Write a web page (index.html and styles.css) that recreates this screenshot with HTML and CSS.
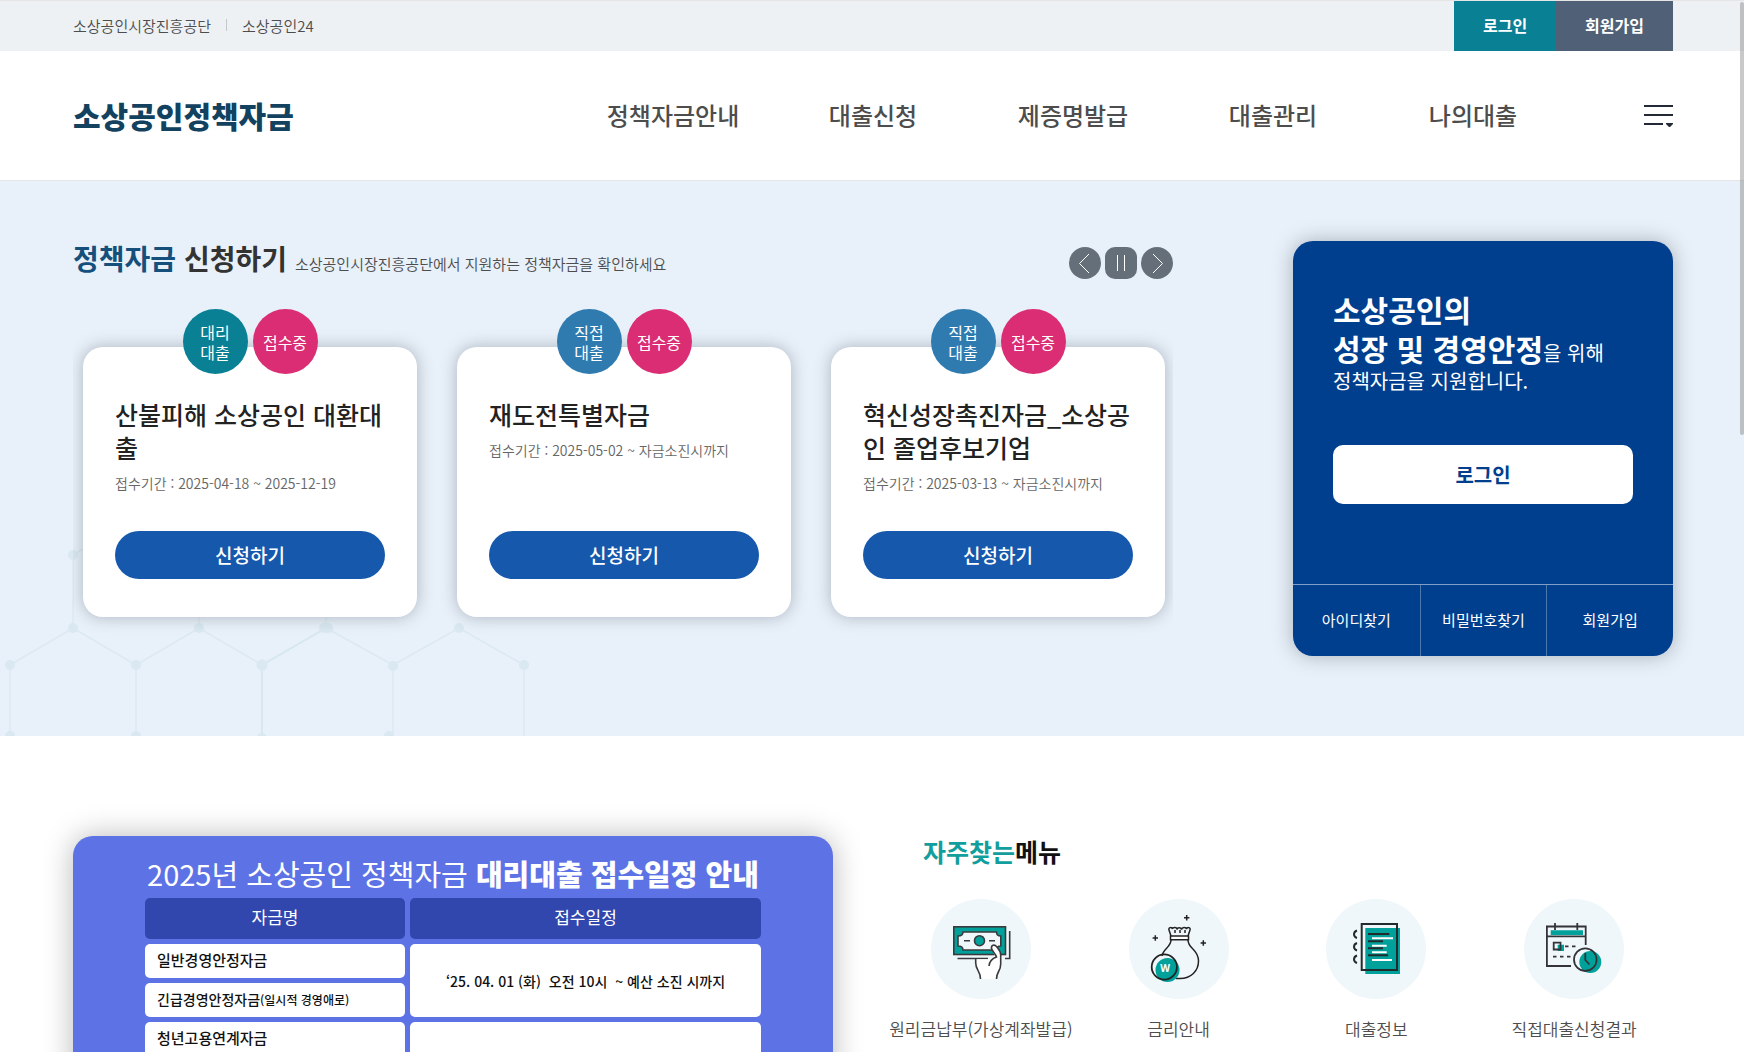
FILE: index.html
```html
<!DOCTYPE html>
<html lang="ko">
<head>
<meta charset="utf-8">
<meta name="viewport" content="width=device-width, initial-scale=1">
<title>소상공인정책자금</title>
<link rel="stylesheet" href="styles.css">
</head>
<body>
<div class="page">
  <div class="topbar">
    <div class="container topbar-inner">
      <ul class="site-links">
        <li><a href="#">소상공인시장진흥공단</a></li>
        <li><a href="#">소상공인24</a></li>
      </ul>
      <div class="account-links">
        <a class="account-login" href="#">로그인</a>
        <a class="account-join" href="#">회원가입</a>
      </div>
    </div>
  </div>

  <header class="header">
    <div class="container header-inner">
      <h1 class="logo"><a href="#">소상공인정책자금</a></h1>
      <nav class="gnb">
        <a href="#">정책자금안내</a>
        <a href="#">대출신청</a>
        <a href="#">제증명발급</a>
        <a href="#">대출관리</a>
        <a href="#">나의대출</a>
      </nav>
      <button class="menu-button" type="button" aria-label="전체메뉴">
        <svg width="29" height="22" viewBox="0 0 29 22" fill="#232a36" aria-hidden="true">
          <rect width="29" height="2"/><rect y="9" width="29" height="2"/><rect y="18" width="19" height="2"/>
          <path d="M22 18h7v1l-3.500 3.500L22 19z"/>
        </svg>
      </button>
    </div>
  </header>

  <section class="hero">
    <svg class="hero-pattern" width="540" height="300" viewBox="0 0 540 300" aria-hidden="true">
      <g fill="none" stroke="#dbe9f2" stroke-width="1.500">
        <path d="M73 119V192M73 119L136 82M199 120V192M326 120V192M10 300V229L73 192L136 229V300M136 229L199 192L262 229M326 192L393 229V300M393 229L459 192L524 229V300"/>
        <path d="M262 300V229L326 192" stroke="#d6e7ef" stroke-width="2"/>
      </g>
      <g fill="#d9e8f1">
        <circle cx="73" cy="119" r="5"/><circle cx="73" cy="192" r="5"/><circle cx="199" cy="192" r="5"/><circle cx="324" cy="192" r="5"/><circle cx="328" cy="192" r="5"/><circle cx="459" cy="192" r="5"/>
        <circle cx="10" cy="229" r="5"/><circle cx="136" cy="229" r="5"/><circle cx="262" cy="229" r="5.500"/><circle cx="393" cy="230" r="5"/><circle cx="524" cy="229" r="5"/>
        <circle cx="10" cy="300" r="5"/><circle cx="136" cy="300" r="5"/><circle cx="262" cy="302" r="5"/><circle cx="389" cy="300" r="5"/>
      </g>
    </svg>
    <div class="container hero-inner">
      <div class="apply">
        <div class="apply-head">
          <h2 class="apply-title"><em>정책자금</em> 신청하기</h2>
          <p class="apply-sub">소상공인시장진흥공단에서 지원하는 정책자금을 확인하세요</p>
          <div class="pager">
            <button type="button" aria-label="이전"><svg width="32" height="32" viewBox="0 0 32 32" aria-hidden="true"><path d="M20 7L10.500 16.500L20 26"/></svg></button>
            <button class="pager-pause" type="button" aria-label="정지"><svg width="32" height="32" viewBox="0 0 32 32" aria-hidden="true"><path d="M12.500 8V24M19.500 8V24"/></svg></button>
            <button type="button" aria-label="다음"><svg width="32" height="32" viewBox="0 0 32 32" aria-hidden="true"><path d="M12 7L21.500 16.500L12 26"/></svg></button>
          </div>
        </div>
        <div class="cards">
          <article class="card">
            <div class="badges"><span class="badge badge-agency">대리<br>대출</span><span class="badge badge-open">접수중</span></div>
            <h3>산불피해 소상공인 대환대출</h3>
            <p>접수기간 : 2025-04-18 ~ 2025-12-19</p>
            <a class="apply-button" href="#">신청하기</a>
          </article>
          <article class="card">
            <div class="badges"><span class="badge badge-direct">직접<br>대출</span><span class="badge badge-open">접수중</span></div>
            <h3>재도전특별자금</h3>
            <p>접수기간 : 2025-05-02 ~ 자금소진시까지</p>
            <a class="apply-button" href="#">신청하기</a>
          </article>
          <article class="card">
            <div class="badges"><span class="badge badge-direct">직접<br>대출</span><span class="badge badge-open">접수중</span></div>
            <h3>혁신성장촉진자금_소상공인 졸업후보기업</h3>
            <p>접수기간 : 2025-03-13 ~ 자금소진시까지</p>
            <a class="apply-button" href="#">신청하기</a>
          </article>
        </div>
      </div>

      <aside class="login-card">
        <div class="login-body">
          <p class="login-copy">소상공인의<br>성장 및 경영안정<span>을 위해</span></p>
          <p class="login-copy-sub">정책자금을 지원합니다.</p>
          <button class="login-button" type="button">로그인</button>
        </div>
        <div class="login-links">
          <a href="#">아이디찾기</a>
          <a href="#">비밀번호찾기</a>
          <a href="#">회원가입</a>
        </div>
      </aside>
    </div>
  </section>

  <main class="container lower">
    <section class="notice">
      <h2>2025년 소상공인 정책자금 <strong>대리대출 접수일정 안내</strong></h2>
      <table>
        <colgroup><col class="col-fund"><col></colgroup>
        <thead>
          <tr><th scope="col">자금명</th><th scope="col">접수일정</th></tr>
        </thead>
        <tbody>
          <tr><td>일반경영안정자금</td><td class="period" rowspan="2">‘25. 04. 01 (화)&nbsp; 오전 10시&nbsp; ~ 예산 소진 시까지</td></tr>
          <tr><td class="tight">긴급경영안정자금<small>(일시적 경영애로)</small></td></tr>
          <tr><td>청년고용연계자금</td><td></td></tr>
        </tbody>
      </table>
    </section>

    <section class="quick">
      <h2><em>자주찾는</em>메뉴</h2>
      <ul>
        <li><a href="#">
          <svg viewBox="0 0 100 100" fill="none" stroke="#3a3a3c" stroke-width="1.600" aria-hidden="true">
            <rect x="22.800" y="27.800" width="51.700" height="27.700" fill="#00a19b"/>
            <path d="M32 33H65.500C65.500 35.500 67 37 69.800 37V47C67 47 65.500 48.500 65.500 51H32C32 48.500 30.500 47 27 47V37C30.500 37 32 35.500 32 33Z" fill="#eff7fa"/>
            <circle cx="48.500" cy="41.700" r="5" fill="#00a19b"/>
            <path d="M33 41.700H39M58 41.700H64M78.700 32V59.500H74M26.500 59.500H57"/>
            <path d="M44.700 60.300C44.700 65 44.500 68 46.500 70.500C48.500 73 49.500 74 49.500 80H65.500C65.500 74 66.500 73.500 68 71C69.500 68.500 69.700 67 69.700 64V56C69.700 52 67.500 50 65.500 47.500C63.500 45 60 46 60.500 49.500C61 53 63.500 54.500 64 57.500L60 60.300Z" fill="#fff" stroke="none"/>
            <path d="M44.700 60V64C44.700 71 49.500 72 49.500 80M65.500 80C65.500 72 69.700 73 69.700 65V56C69.700 52 67.500 50 65.500 47.500C63.500 45 60 46 60.500 49.500C61 52 64.500 54.500 65.500 58C61 59.500 58.500 62 58 67"/>
          </svg>
          <span>원리금납부(가상계좌발급)</span></a></li>
        <li><a href="#">
          <svg viewBox="0 0 100 100" fill="none" stroke="#232323" stroke-width="1.500" aria-hidden="true">
            <path d="M42 37L40 31C39 28 43 28 43.500 30C43.500 28 48 28 48 30.500C48.500 28 52 28 52.500 30.500C53 28 57 28 57.500 30C58 28 62 28 61 31L59 37M46 31V34M51 31V34M56 31V34"/>
            <path d="M41.500 37H59.500V40.800H41.500Z" fill="#fff"/>
            <path d="M42 41C42 48 34 50 33 57M59 41C59 50 69.500 50 69.500 62C69.500 72 62 79.500 51 79.500H47"/>
            <circle cx="38.500" cy="71" r="12" fill="#00a19b" stroke="none"/>
            <circle cx="35.300" cy="68" r="12.600" stroke-width="1.800"/>
            <path d="M57.700 16V21.400M55 18.700H60.400M26.300 36.300V41.700M23.600 39H29M74.300 41.300V46.700M71.600 44H77"/>
            <text class="coin-mark" x="36" y="72.500" text-anchor="middle">W</text>
          </svg>
          <span>금리안내</span></a></li>
        <li><a href="#">
          <svg viewBox="0 0 100 100" fill="none" stroke="#222b2b" stroke-width="2" aria-hidden="true">
            <rect x="39.300" y="29" width="34.700" height="46" fill="#00a19b" stroke="none"/>
            <rect x="35.700" y="25" width="35.300" height="46"/>
            <path d="M42 35H63.300M42 42.300H57M42 49.300H57M42 56.300H62"/>
            <path d="M31 31.500C27 33 27 37.500 31 39M31 44C27 45.500 27 50 31 51.500M31 56.500C27 58 27 62.500 31 64"/>
            <path d="M46 39.300H67M46 46.700H60.700M46 53.300H60.700M46 61H66" stroke="#fff"/>
          </svg>
          <span>대출정보</span></a></li>
        <li><a href="#">
          <svg viewBox="0 0 100 100" fill="none" stroke="#333338" stroke-width="1.800" aria-hidden="true">
            <path d="M26.700 31.300H59V36H26.700ZM33.700 45.700H40V52H33.700Z" fill="#00a19b" stroke="none"/>
            <path d="M47 67H22.900V27.500H61.700V46M22.900 37.300H61.700M31 24V31M53.300 24V31M29.700 43.700H36.500V50.500H29.700Z"/>
            <path d="M41 47.300H52M29 57.700H48" stroke-dasharray="3.500 3.500"/>
            <circle cx="66.300" cy="63" r="11" fill="#00a19b" stroke="none"/>
            <circle cx="61.300" cy="60.700" r="11.300"/>
            <path d="M61.300 54V61L65.500 65.500"/>
          </svg>
          <span>직접대출신청결과</span></a></li>
      </ul>
    </section>
  </main>
</div>
<div class="scroll-thumb" aria-hidden="true"></div>
</body>
</html>
```
FILE: styles.css
```css
* {
  box-sizing: border-box;
}

body {
  margin: 0;
  font-family: "Noto Sans CJK KR", sans-serif;
  font-size: 15px;
  color: #4d4d4d;
  background: #fff;
}

h1, h2, h3, p, ul {
  margin: 0;
  padding: 0;
}

ul {
  list-style: none;
}

a {
  color: inherit;
  text-decoration: none;
}

em {
  font-style: normal;
}

button {
  padding: 0;
  border: 0;
  font: inherit;
  cursor: pointer;
}

.page {
  height: 100vh;
  overflow-x: hidden;
  overflow-y: auto;
  scrollbar-width: none;
}

.scroll-thumb {
  position: fixed;
  top: 2px;
  right: 0;
  width: 4px;
  height: 433px;
  border-radius: 2px;
  background: rgba(120, 120, 120, 0.4);
}

.container {
  padding: 0 71px 0 73px;
}

/* Top bar */
.topbar {
  border-top: 1px solid #e5e5e5;
  background: #edf1f4;
}

.topbar-inner {
  display: flex;
  justify-content: space-between;
  height: 50px;
}

.site-links {
  display: flex;
  align-items: center;
  padding-bottom: 2px;
  font-weight: 350;
}

.site-links li + li {
  display: flex;
  align-items: center;
}

.site-links li + li::before {
  content: "";
  width: 1px;
  height: 12px;
  margin: 0 15px;
  background: #c4c8ca;
}

.account-links {
  display: flex;
  font-size: 16px;
  line-height: 48px;
  font-weight: 700;
  color: #fff;
}

.account-links a {
  padding: 0 29px;
}

.account-login {
  background: #0a8094;
}

.account-join {
  background: #4f6077;
}

/* Header */
.header {
  border-bottom: 1px solid #e5e5e5;
}

.header-inner {
  display: grid;
  grid-template-columns: 1fr 1000px 100px;
  align-items: center;
  height: 129px;
}

.logo {
  padding-bottom: 2px;
  font-size: 30px;
  font-weight: 900;
  color: #12425f;
}

.gnb {
  display: grid;
  grid-template-columns: repeat(5, 1fr);
  padding-bottom: 2px;
  text-align: center;
  font-size: 24px;
  font-weight: 500;
}

.menu-button {
  justify-self: end;
  background: none;
}

.menu-button svg {
  display: block;
}

/* Hero */
.hero {
  position: relative;
  padding: 60px 0 80px;
  background: #e8f0f9;
}

.hero-pattern {
  position: absolute;
  left: 0;
  bottom: 0;
}

.hero-inner {
  position: relative;
  display: grid;
  grid-template-columns: 1fr 380px;
  gap: 120px;
}

.apply-head {
  display: flex;
  align-items: baseline;
  gap: 8px;
  height: 106px;
}

.apply-title {
  font-size: 28px;
  line-height: 34px;
  font-weight: 700;
  color: #333;
}

.apply-title em {
  color: #15507c;
}

.apply-sub {
  font-weight: 350;
}

.pager {
  display: flex;
  gap: 4px;
  margin: 6px 0 0 auto;
  align-self: flex-start;
}

.pager button {
  width: 32px;
  height: 32px;
  border-radius: 16px;
  background: #646f79;
}

.pager .pager-pause {
  border-radius: 10px;
}

.pager svg {
  display: block;
  fill: none;
  stroke: #fff;
}

/* Card shadows stop at the slider's side edges */
.cards {
  display: grid;
  grid-template-columns: repeat(3, 1fr);
  gap: 40px;
  padding: 0 8px 0 10px;
  clip-path: inset(-60px 0 -60px 0);
}

.card {
  position: relative;
  display: flex;
  flex-direction: column;
  height: 270px;
  padding: 51px 32px 38px;
  border-radius: 20px;
  background: #fff;
  box-shadow: 0 0 16px rgba(70, 85, 100, 0.38);
}

.badges {
  position: absolute;
  top: -38px;
  left: 0;
  right: 0;
  display: flex;
  justify-content: center;
  gap: 5px;
}

.badge {
  display: flex;
  align-items: center;
  justify-content: center;
  width: 65px;
  height: 65px;
  border-radius: 50%;
  font-size: 16px;
  line-height: 20px;
  color: #fff;
}

.badge-agency {
  background: #0a8094;
}

.badge-direct {
  background: #2f7bb0;
}

.badge-open {
  background: #da2d73;
}

.card h3 {
  font-size: 25px;
  line-height: 33px;
  font-weight: 500;
  color: #222;
}

.card p {
  margin-top: 9px;
  font-size: 14px;
  line-height: 20px;
  font-weight: 350;
  color: #666;
}

.apply-button {
  margin-top: auto;
  border-radius: 24px;
  background: #1558ac;
  font-size: 19px;
  line-height: 48px;
  font-weight: 500;
  text-align: center;
  color: #fff;
}

.login-card {
  display: flex;
  flex-direction: column;
  height: 415px;
  border-radius: 20px;
  background: #003f8e;
  box-shadow: 0 0 20px rgba(70, 85, 95, 0.4);
  color: #fff;
}

.login-body {
  flex: 1;
  padding: 49px 40px 0;
}

.login-copy {
  font-size: 30px;
  line-height: 39px;
  font-weight: 700;
}

.login-copy span {
  font-size: 20px;
  line-height: 20px;
  font-weight: 400;
}

.login-copy-sub {
  font-size: 20px;
  line-height: 26px;
  font-weight: 400;
}

.login-button {
  width: 100%;
  height: 59px;
  margin-top: 51px;
  border-radius: 10px;
  background: #fff;
  font-size: 20px;
  font-weight: 700;
  color: #003f8e;
}

.login-links {
  display: grid;
  grid-template-columns: repeat(3, 1fr);
  border-top: 1px solid #809fc7;
  line-height: 69px;
  text-align: center;
}

.login-links a {
  padding-bottom: 2px;
}

.login-links a + a {
  border-left: 1px solid #4d79b0;
}

/* Notice and quick menu */
.lower {
  display: grid;
  grid-template-columns: 760px 1fr;
  gap: 49px;
  padding-top: 100px;
  padding-bottom: 60px;
}

.notice {
  padding: 18px 67px 40px;
  border-radius: 20px;
  background: #5d72e4;
  box-shadow: 0 0 30px rgba(0, 0, 0, 0.28);
}

.notice h2 {
  font-size: 29px;
  line-height: 39px;
  font-weight: 400;
  text-align: center;
  white-space: nowrap;
  color: #fff;
}

.notice strong {
  font-weight: 900;
}

.notice table {
  width: 100%;
  table-layout: fixed;
  border-spacing: 5px;
}

.col-fund {
  width: 260px;
}

.notice th {
  height: 41px;
  padding: 0 0 3px;
  border-radius: 5px;
  background: #3147ad;
  font-size: 17px;
  line-height: 24px;
  font-weight: 400;
  color: #fff;
}

.notice td {
  height: 34px;
  padding: 0 12px 2px;
  border-radius: 5px;
  background: #fff;
  line-height: 24px;
  font-weight: 500;
  color: #111;
}

.notice .tight {
  font-size: 14px;
}

.notice small {
  font-size: 12px;
}

.notice .period {
  padding-bottom: 0;
  font-size: 14px;
  text-align: center;
}

.quick h2 {
  margin-left: 41px;
  font-size: 25px;
  line-height: 31px;
  font-weight: 700;
  color: #111;
}

.quick h2 em {
  color: #129e9c;
}

.quick ul {
  display: grid;
  grid-template-columns: repeat(4, 1fr);
  margin-top: 32px;
}

.quick a {
  display: flex;
  flex-direction: column;
  align-items: center;
  gap: 17px;
  font-size: 17px;
  line-height: 25px;
  font-weight: 350;
  white-space: nowrap;
}

.quick svg {
  width: 100px;
  height: 100px;
  border-radius: 50%;
  background: #eff7fa;
}

.coin-mark {
  font: 700 10px "Open Sans", sans-serif;
  fill: #fff;
  stroke: none;
}
```
